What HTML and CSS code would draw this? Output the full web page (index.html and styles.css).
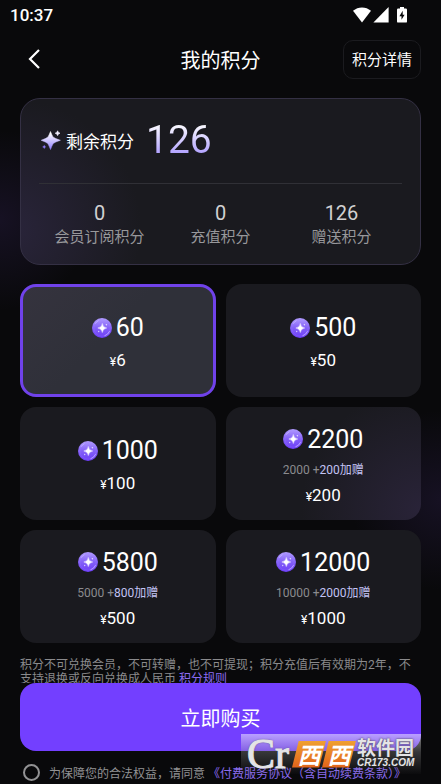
FILE: index.html
```html
<!DOCTYPE html>
<html lang="zh-CN">
<head>
<meta charset="utf-8">
<meta name="viewport" content="width=device-width, initial-scale=1">
<title>我的积分</title>
<link rel="stylesheet" href="styles.css">
</head>
<body>
<svg class="defs" aria-hidden="true">
  <defs>
    <linearGradient id="spark" x1="0" y1="0" x2="0" y2="1">
      <stop offset="0.1" stop-color="#fff"/><stop offset="1" stop-color="#8f7bff"/>
    </linearGradient>
    <linearGradient id="coinFill" x1="0" y1="0" x2="0" y2="1">
      <stop offset="0" stop-color="#b19cff"/><stop offset="0.5" stop-color="#8460f8"/><stop offset="1" stop-color="#6c3cf8"/>
    </linearGradient>
    <symbol id="coin" viewBox="0 0 20 20">
      <circle cx="10" cy="10" r="10" fill="url(#coinFill)"/>
      <circle cx="10" cy="10" r="8.2" fill="none" stroke="#a48cff" stroke-width="0.6" opacity="0.35"/>
      <path d="M17.6 13.2A8.2 8.2 0 0 1 12.5 17.8M3 5.8A8.2 8.2 0 0 1 6.5 2.6" fill="none" stroke="#c9b9ff" stroke-width="0.8"/>
      <path d="M10.3 5.4Q10.8 9.4 14.8 10Q10.8 10.6 10.3 14.6Q9.8 10.6 5.8 10Q9.8 9.4 10.3 5.4Z" fill="#fff" stroke="#fff" stroke-width="0.4"/>
      <path d="M14.3 5.7l.3.8.8.3-.8.3-.3.8-.3-.8-.8-.3.8-.3zM6.8 12.6l.3.6.6.3-.6.3-.3.6-.3-.6-.6-.3.6-.3z" fill="#fff"/>
    </symbol>
  </defs>
</svg>
<div class="app">
  <div class="status">
    <span>10:37</span>
    <div class="status-icons">
      <svg width="18" height="16" viewBox="0 0 18 16" aria-hidden="true"><path d="M0 3.8Q4 .4 9 .4T18 3.8L9 15.4Z" fill="#fff"/></svg>
      <svg width="16" height="16" viewBox="0 0 16 16" aria-hidden="true"><path d="M15.6 0V15.4H.4Z" fill="#fff"/></svg>
      <svg class="battery" width="10" height="16" viewBox="0 0 10 16" aria-hidden="true"><path d="M3 0h4v1.6h1.8Q10 1.6 10 2.8v11.6q0 1.2-1.2 1.2H1.2Q0 15.6 0 14.4V2.8Q0 1.6 1.2 1.6H3Z" fill="#fff"/><path d="M5.7 3.8 2.4 9.2h2.1v3.6L7.6 7.8H5.7Z" fill="#09090b"/></svg>
    </div>
  </div>
  <header class="header">
    <button class="back" type="button" aria-label="返回"><svg width="14" height="22" viewBox="0 0 14 22" aria-hidden="true"><path d="M12 2 3 11l9 9" fill="none" stroke="#fff" stroke-width="2.2"/></svg></button>
    <h1>我的积分</h1>
    <button class="detail" type="button">积分详情</button>
  </header>
  <main class="content">
    <section class="balance">
      <div class="balance-top">
        <svg width="20" height="20" viewBox="0 0 20 20" aria-hidden="true"><path d="M9.5 1.5Q10.6 4.4 12 7Q14 8.6 19.4 10.3Q14 12 12.2 13.5Q10.8 16 9.5 19.6Q8.2 16 6.8 13.5Q5 12 .2 10.3Q5 8.6 7 7Q8.4 4.4 9.5 1.5Z" fill="url(#spark)" stroke="url(#spark)" stroke-width="0.5"/><path d="M16.6.8q.3 2.1 2.4 2.4q-2.1.3-2.4 2.4q-.3-2.1-2.4-2.4q2.1-.3 2.4-2.4z" fill="#f4f0ff" stroke="#f4f0ff" stroke-width="0.7"/><path d="M3.2 14.8l.7 1.4 1.4.7-1.4.7-.7 1.4-.7-1.4-1.4-.7 1.4-.7z" fill="#8f7bff"/></svg>
        <h2>剩余积分</h2>
        <strong>126</strong>
      </div>
      <dl class="stats">
        <div><dt>会员订阅积分</dt><dd>0</dd></div>
        <div><dt>充值积分</dt><dd>0</dd></div>
        <div><dt>赠送积分</dt><dd>126</dd></div>
      </dl>
    </section>
    <div class="plans" role="radiogroup" aria-label="积分套餐">
      <label class="plan"><input type="radio" name="plan" checked><span class="amount"><svg><use href="#coin"/></svg>60</span><span class="price"><small>¥</small>6</span></label>
      <label class="plan"><input type="radio" name="plan"><span class="amount"><svg><use href="#coin"/></svg>500</span><span class="price"><small>¥</small>50</span></label>
      <label class="plan"><input type="radio" name="plan"><span class="amount"><svg><use href="#coin"/></svg>1000</span><span class="price"><small>¥</small>100</span></label>
      <label class="plan"><input type="radio" name="plan"><span class="amount"><svg><use href="#coin"/></svg>2200</span><span class="bonus">2000 +<b>200加赠</b></span><span class="price"><small>¥</small>200</span></label>
      <label class="plan"><input type="radio" name="plan"><span class="amount"><svg><use href="#coin"/></svg>5800</span><span class="bonus">5000 +<b>800加赠</b></span><span class="price"><small>¥</small>500</span></label>
      <label class="plan"><input type="radio" name="plan"><span class="amount"><svg><use href="#coin"/></svg>12000</span><span class="bonus">10000 +<b>2000加赠</b></span><span class="price"><small>¥</small>1000</span></label>
    </div>
    <p class="note">积分不可兑换会员，不可转赠，也不可提现；积分充值后有效期为2年，不支持退换或反向兑换成人民币 <a href="#rules">积分规则</a></p>
  </main>
  <footer class="footer">
    <button class="buy" type="button">立即购买</button>
    <div class="agree">
      <input type="checkbox" id="agree">
      <label for="agree">为保障您的合法权益，请同意 <a href="#terms">《付费服务协议（含自动续费条款）》</a></label>
    </div>
    <div class="watermark">
      <span class="mark-cr">Cr</span>
      <span class="mark-tile">西</span>
      <span class="mark-tile">西</span>
      <span class="mark-name"><span>软件园</span><em>CR173.COM</em></span>
    </div>
  </footer>
</div>
</body>
</html>
```
FILE: styles.css
```css
* { box-sizing: border-box; }
body {
  margin: 0;
  background: #09090b;
  color: #fff;
  font-family: Roboto, "Noto Sans CJK SC", sans-serif;
}
button { border: 0; padding: 0; background: none; color: inherit; font: inherit; }
a { color: #8b6cf0; text-decoration: none; }
h1, h2, p, dl, dd { margin: 0; font-weight: 400; }
.defs { position: absolute; width: 0; height: 0; }
.app {
  display: flex;
  flex-direction: column;
  height: 100vh;
  overflow: hidden;
  background:
    radial-gradient(circle at 0 220px, rgba(92, 60, 160, 0.16), transparent 90px),
    radial-gradient(circle at 100% 500px, rgba(92, 60, 160, 0.16), transparent 90px);
}
.status {
  display: flex;
  flex: none;
  justify-content: space-between;
  align-items: center;
  height: 30px;
  padding: 0 34px 0 10px;
  font-size: 17px;
  font-weight: 500;
}
.status-icons { display: flex; align-items: center; gap: 2px; }
.battery { margin-left: 6px; }
.header {
  display: grid;
  flex: none;
  grid-template-columns: 1fr auto 1fr;
  align-items: center;
  height: 58px;
  padding: 0 20px;
}
.back { justify-self: start; width: 28px; height: 40px; }
.back svg { display: block; margin: auto; }
.header h1, .buy { padding-top: 3px; font-size: 20px; line-height: 28px; }
.detail {
  justify-self: end;
  height: 39px;
  padding: 0 8px 2px;
  border: 1px solid #1b1b1f;
  border-radius: 10px;
  font-size: 15px;
}
.content {
  flex: 1;
  min-height: 0;
  overflow: hidden;
  padding: 10px 20px 0;
}
.balance {
  padding: 16px 18px;
  border: 1px solid #343044;
  border-radius: 20px;
  background: radial-gradient(circle at -10px 130px, #29243a, #1a1a1f 130px);
}
.balance-top {
  display: flex;
  align-items: center;
  height: 68px;
  padding: 0 2px 18px;
}
.balance-top h2 { margin: 0 12px 0 5px; font-size: 17px; }
.balance-top strong {
  font-size: 39px;
  line-height: 48px;
  font-weight: 400;
  background: linear-gradient(#fff 15%, #a391ff 90%);
  background-clip: text;
  color: transparent;
}
.stats {
  display: grid;
  grid-template-columns: repeat(3, 1fr);
  padding-top: 16px;
  border-top: 1px solid #303036;
  text-align: center;
}
.stats div { display: flex; flex-direction: column-reverse; }
.stats dt { color: #98989b; font-size: 15px; line-height: 22px; }
.stats dd { color: #d1d1d2; font-size: 20px; line-height: 26px; }
.plans {
  display: grid;
  grid-template-columns: 1fr 1fr;
  grid-auto-rows: minmax(113px, auto);
  gap: 10px;
  margin-top: 19px;
}
.plan {
  position: relative;
  display: flex;
  flex-direction: column;
  align-items: center;
  justify-content: center;
  gap: 7px;
  padding-top: 2px;
  border: 3px solid transparent;
  border-radius: 16px;
  background: #1a1a1f border-box;
}
.plan:nth-child(4) { background: radial-gradient(circle at 100% 90%, #292338, #1a1a1f 120px) border-box; }
.plan:has(:checked) { border-color: #7042ea; background: linear-gradient(135deg, #35333e, #2f3039 45%); }
.plan input { position: absolute; opacity: 0; margin: 0; }
.amount { display: flex; align-items: center; gap: 4px; padding-top: 1px; font-size: 25px; line-height: 31px; }
.amount svg { width: 20px; height: 20px; }
.bonus { color: #8b8b8e; font-size: 12px; line-height: 16px; }
.bonus b { color: #c3c3f4; font-weight: 400; }
.price { font-size: 17px; line-height: 20px; }
.price small { font-size: 12px; }
.note { margin-top: 15px; color: #8a8a8c; font-size: 12px; line-height: 14px; }
.footer { position: relative; flex: none; height: 101px; padding: 0 20px; }
.buy { display: block; width: 100%; height: 68px; border-radius: 16px; background: #733fff; }
.agree {
  display: flex;
  align-items: center;
  gap: 9px;
  height: 42px;
  padding-left: 3px;
  color: #929294;
  font-size: 12px;
  white-space: nowrap;
}
.agree input {
  appearance: none;
  width: 17px;
  height: 17px;
  margin: 0;
  border: 2px solid #929294;
  border-radius: 50%;
}
.watermark {
  position: absolute;
  top: 51px;
  right: 20px;
  display: flex;
  align-items: center;
  width: 180px;
  height: 40px;
  padding-left: 6px;
  background: linear-gradient(rgba(255, 255, 255, 0.5), rgba(160, 160, 160, 0.3) 45%, rgba(60, 60, 60, 0.05));
  pointer-events: none;
}
.mark-cr {
  width: 45px;
  color: #e4e4e6;
  font: 42px/40px "Liberation Serif", serif;
  -webkit-text-stroke: 1px #e4e4e6;
  text-shadow: 0 0 2px #444;
}
.mark-tile {
  width: 34px;
  height: 27px;
  margin-right: -4px;
  background: linear-gradient(#f0a030, #e0631b);
  clip-path: polygon(20% 0, 100% 0, 80% 100%, 0 100%);
  font: italic bold 23px/26px "Noto Sans CJK SC", sans-serif;
  text-align: center;
}
.mark-name {
  display: flex;
  flex-direction: column;
  margin-left: 5px;
  color: #e4e4e6;
  font: bold 19px/18px "Noto Sans CJK SC", sans-serif;
  text-shadow: 0 0 2px #333;
  white-space: nowrap;
}
.mark-name em { font: italic bold 10px/14px "Liberation Sans", sans-serif; }
```
